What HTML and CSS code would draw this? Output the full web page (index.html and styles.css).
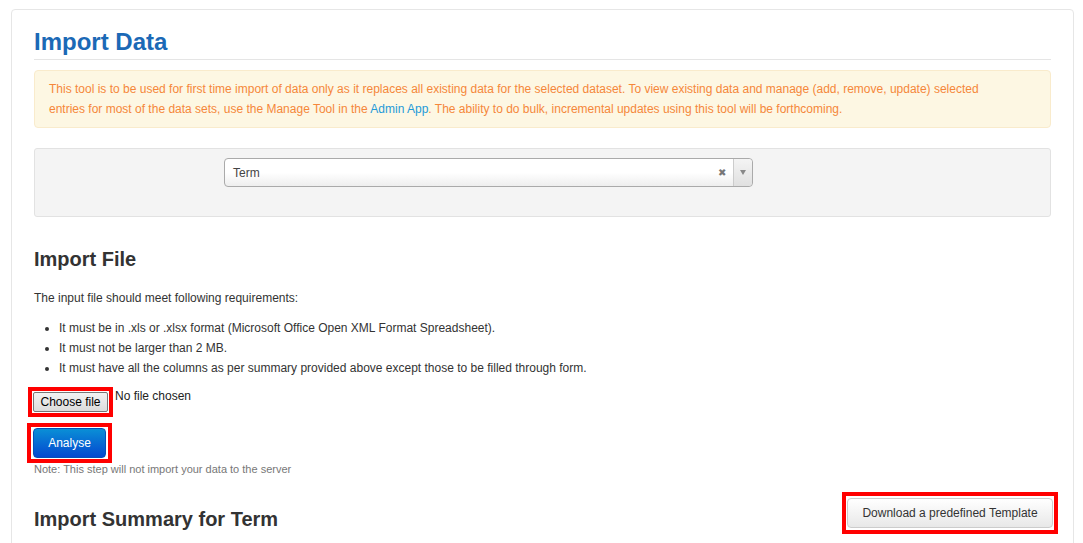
FILE: index.html
```html
<!DOCTYPE html>
<html lang="en">

<head>
    <meta charset="UTF-8">
    <meta name="viewport" content="width=device-width, initial-scale=1.0">
    <title>Import Data</title>
    <link rel="stylesheet" href="styles.css">
</head>

<body>
    <div class="card">
        <h1 class="page_title">Import Data</h1>

        <div class="alert">
            This tool is to be used for first time import of data only as it replaces all existing data for the selected dataset. To view existing data and manage (add, remove, update) selected
            entries for most of the data sets, use the Manage Tool in the <a href="#">Admin App</a>. The ability to do bulk, incremental updates using this tool will be forthcoming.
        </div>

        <div class="well">
            <div class="select_box">
                <span class="select_text">Term</span>
                <span class="select_clear">&#10006;</span>
                <span class="select_arrow"><i></i></span>
            </div>
        </div>

        <h3 class="section_title">Import File</h3>
        <p class="intro">The input file should meet following requirements:</p>
        <ul class="reqs">
            <li>It must be in .xls or .xlsx format (Microsoft Office Open XML Format Spreadsheet).</li>
            <li>It must not be larger than 2 MB.</li>
            <li>It must have all the columns as per summary provided above except those to be filled through form.</li>
        </ul>

        <div class="file_row">
            <span class="mark"><button class="file_btn">Choose file</button></span>
            <span class="file_name">No file chosen</span>
        </div>

        <div class="analyse_row">
            <span class="mark"><button class="btn_primary">Analyse</button></span>
        </div>
        <p class="note">Note: This step will not import your data to the server</p>

        <div class="summary_row">
            <h3 class="section_title summary_title">Import Summary for Term</h3>
            <span class="mark mark_right"><button class="btn_default">Download a predefined Template</button></span>
        </div>
    </div>
</body>

</html>
```

FILE: styles.css
```css
body {
    margin: 0;
    background: #fff;
    font-family: "Liberation Sans", Arial, sans-serif;
    font-size: 12px;
    color: #333;
}

.card {
    margin: 9px 0 0 11px;
    width: 1063px;
    height: 560px;
    box-sizing: border-box;
    border: 1px solid #e6e6e6;
    border-radius: 4px;
    padding: 17px 22px 0 22px;
}

.page_title {
    margin: 0;
    font-size: 24px;
    line-height: 30px;
    font-weight: 700;
    color: #1b69b6;
    padding-bottom: 2px;
    border-bottom: 1px solid #e5e5e5;
}

.alert {
    margin-top: 10px;
    background: #fdf7e3;
    border: 1px solid #f9ebcc;
    border-radius: 4px;
    padding: 8px 35px 8px 14px;
    line-height: 20px;
    color: #f5873a;
}

.alert a {
    color: #1f9ad8;
    text-decoration: none;
}

.well {
    margin-top: 20px;
    background: #f4f4f4;
    border: 1px solid #e2e2e2;
    border-radius: 3px;
    padding: 9px 0 29px 189px;
}

.select_box {
    display: flex;
    align-items: center;
    width: 529px;
    height: 29px;
    box-sizing: border-box;
    border: 1px solid #aaa;
    border-radius: 4px;
    background: linear-gradient(#fff 0%, #fff 50%, #eee 100%);
    color: #444;
}

.select_text {
    flex: 1;
    padding-left: 8px;
}

.select_clear {
    font-size: 10px;
    color: #777;
    margin-right: 7px;
}

.select_arrow {
    width: 18px;
    height: 100%;
    border-left: 1px solid #ccc;
    display: flex;
    align-items: center;
    justify-content: center;
    background: linear-gradient(#f4f4f4, #e0e0e0);
    border-radius: 0 4px 4px 0;
}

.select_arrow i {
    width: 0;
    height: 0;
    border-left: 3px solid transparent;
    border-right: 3px solid transparent;
    border-top: 5px solid #888;
}

.section_title {
    margin: 30px 0 0 0;
    font-size: 20px;
    line-height: 24px;
    font-weight: 700;
    color: #333;
}

.intro {
    margin: 17px 0 0 0;
    line-height: 20px;
}

.reqs {
    margin: 10px 0 0 0;
    padding-left: 25px;
    line-height: 20px;
}

.mark {
    display: inline-flex;
    border: 4px solid #f00;
    padding: 1px 2px;
    margin-left: -7px;
}

.file_row {
    display: flex;
    align-items: flex-start;
    margin-top: 9px;
}

.file_row .mark {
    padding: 1px;
    margin-left: -6px;
}

.file_btn {
    font-family: "Liberation Sans", Arial, sans-serif;
    font-size: 12px;
    color: #000;
    width: 75px;
    height: 20px;
    padding: 0;
    border: 1px solid #767676;
    border-radius: 2px;
    background: linear-gradient(#f2f2f2, #dcdcdc);
}

.file_name {
    font-size: 12px;
    line-height: 16px;
    margin: 1px 0 0 2px;
    color: #222;
}

.analyse_row {
    margin-top: 6px;
}

.btn_primary {
    font-family: "Liberation Sans", Arial, sans-serif;
    font-size: 12px;
    color: #fff;
    height: 30px;
    width: 73px;
    border: 1px solid #0550b8;
    border-radius: 4px;
    background: linear-gradient(#0a8fd6, #0448d0);
}

.note {
    margin: -1px 0 0 0;
    font-size: 11px;
    line-height: 14px;
    color: #777;
}

.summary_row {
    display: flex;
    justify-content: space-between;
    align-items: flex-start;
    margin-top: 16px;
}

.summary_title {
    margin-top: 15px;
}

.mark_right {
    margin-left: 0;
    margin-right: -7px;
    padding: 2px 1px;
}

.btn_default {
    font-family: "Liberation Sans", Arial, sans-serif;
    font-size: 12px;
    color: #333;
    height: 30px;
    width: 206px;
    border: 1px solid #ccc;
    border-radius: 4px;
    background: linear-gradient(#fff, #e8e8e8);
}
```
